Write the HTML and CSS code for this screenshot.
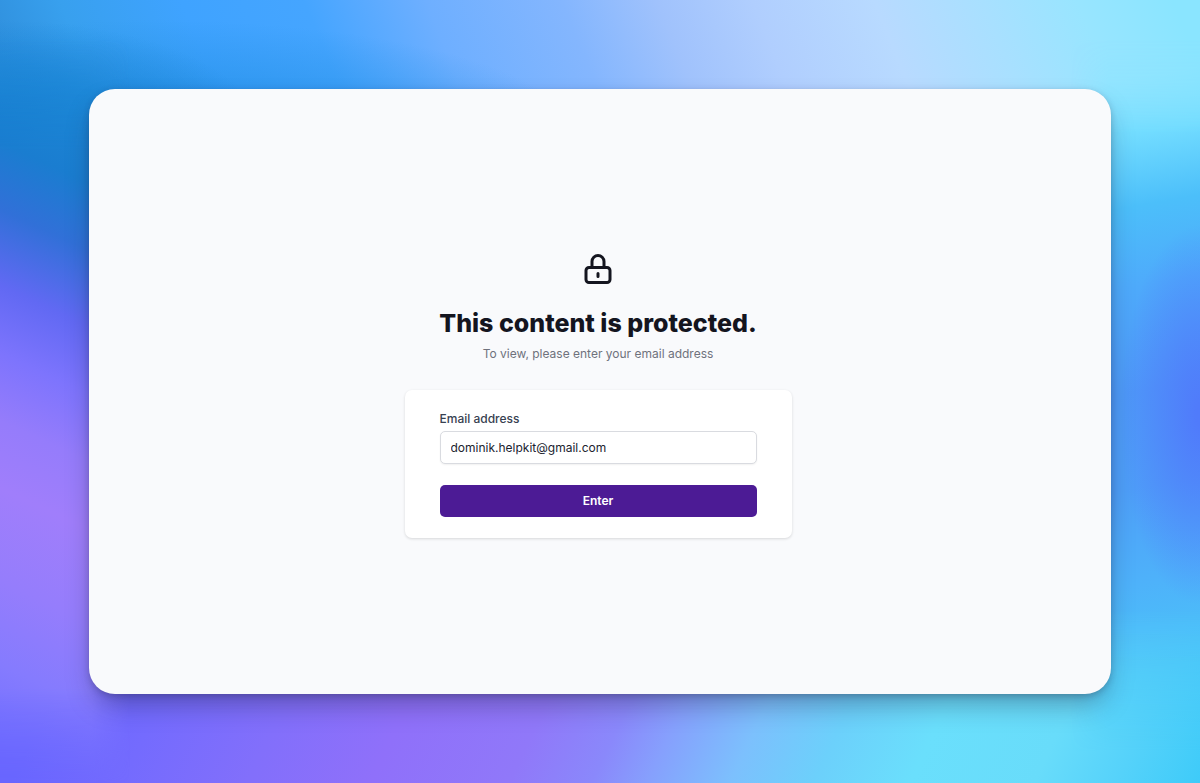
FILE: index.html
```html
<!DOCTYPE html>
<html lang="en">
<head>
<meta charset="utf-8">
<meta name="viewport" content="width=device-width, initial-scale=1">
<title>This content is protected.</title>
<link rel="stylesheet" href="styles.css">
</head>
<body class="page">
<div class="backdrop" aria-hidden="true">
  <div class="glow glow-top"></div>
  <div class="glow glow-bottom"></div>
  <div class="glow glow-left"></div>
  <div class="glow glow-right"></div>
</div>
<main class="panel">
  <div class="gate">
    <svg class="lock" viewBox="0 0 24 24" fill="none" stroke="currentColor" stroke-width="2" stroke-linecap="round" stroke-linejoin="round" aria-hidden="true">
      <path d="M12 15v2m-6 4h12a2 2 0 0 0 2-2v-6a2 2 0 0 0-2-2H6a2 2 0 0 0-2 2v6a2 2 0 0 0 2 2zm10-10V7a4 4 0 0 0-8 0v4h8z"/>
    </svg>
    <h1 class="title">This content is protected.</h1>
    <p class="subtitle">To view, please enter your email address</p>
    <form class="card">
      <label class="label" for="email">Email address</label>
      <input class="input" id="email" type="email" value="dominik.helpkit@gmail.com">
      <button class="button" type="submit">Enter</button>
    </form>
  </div>
</main>
</body>
</html>
```
FILE: styles.css
```css
* {
  box-sizing: border-box;
}

.page {
  margin: 0;
  min-height: 100vh;
  padding: 89px;
  display: flex;
  position: relative;
  font-family: Inter, "Liberation Sans", sans-serif;
  color: #14151f;
}

.backdrop {
  position: absolute;
  inset: 0;
  z-index: -1;
  overflow: hidden;
}

.glow {
  position: absolute;
}

.glow-top {
  inset: 0 0 50% 0;
  background:
    radial-gradient(ellipse 260px 110px at 0 130px, #167fd0 10%, rgba(22, 127, 208, 0) 100%),
    radial-gradient(ellipse 420px 110px at 150px 130px, #2590e6 0%, rgba(37, 144, 230, 0) 100%),
    linear-gradient(68deg, #3090dd 10%, #38a0ee 16%, #3fa3ff 25%, #45a5ff 34%, #6eafff 43%, #84b6fe 53%, #a0c2fc 60%, #b0cefe 67%, #b8daff 76%, #a8e0ff 84%, #98e5ff 91%, #8ae5ff 98%);
}

.glow-bottom {
  inset: 50% 0 0 0;
  background: linear-gradient(115deg, #6966ff 14%, #746bfe 22%, #826ffb 31%, #8f70fa 40%, #9078f9 50%, #8a88fb 56%, #86a0fd 60%, #7cc0fd 66%, #6cd0fb 72%, #6adffc 79%, #68dcfa 88%, #55d2fa 94%, #3ecbf9 100%);
}

.glow-left {
  inset: 0 auto 0 0;
  width: 130px;
  background: linear-gradient(205deg, #3090dd 6%, #1c88d6 13%, #1a7dd0 24%, #3170d8 32%, #6169f3 41%, #7d74fd 49%, #957cfb 57%, #a07efb 65%, #957dfc 76%, #857bfe 86%, #7470ff 95%, #6966ff 100%);
  mask-image: linear-gradient(transparent 5%, #000 19%, #000 88%, transparent 100%), linear-gradient(90deg, #000 70%, transparent);
  mask-composite: intersect;
}

.glow-right {
  inset: 0 0 0 auto;
  width: 130px;
  background:
    radial-gradient(ellipse 80px 190px at 100% 53%, #507bfb 5%, rgba(80, 123, 251, 0) 100%),
    linear-gradient(170deg, #8fe5ff 0%, #8ae4ff 11%, #72dcff 18%, #4cbffa 27%, #4eaafb 37%, #4e9af8 50%, #4e9ff8 62%, #4eb2fa 74%, #4ac4f8 85%, #42cdf9 100%);
  mask-image: linear-gradient(transparent 5%, #000 17%, #000 78%, transparent 96%), linear-gradient(270deg, #000 70%, transparent);
  mask-composite: intersect;
}

.panel {
  flex: 1;
  display: flex;
  align-items: center;
  justify-content: center;
  padding: 5px 4px 0 0;
  border-radius: 26px;
  background: #f9fafc;
  box-shadow: 0 14px 28px -6px rgba(30, 30, 60, 0.4), 0 2px 6px rgba(30, 30, 60, 0.22);
}

.gate {
  width: 100%;
  max-width: 387px;
  display: flex;
  flex-direction: column;
  align-items: center;
}

.lock {
  width: 36px;
  height: 36px;
}

.title {
  margin: 20px 0 0;
  font-size: 25px;
  line-height: 32px;
  font-weight: 800;
}

.subtitle {
  margin: 6px 0 0;
  font-size: 12px;
  line-height: 18px;
  color: #6f727c;
}

.card {
  align-self: stretch;
  margin-top: 27px;
  padding: 20px 35px 21px;
  display: flex;
  flex-direction: column;
  border-radius: 7px;
  background: #fff;
  box-shadow: 0 1px 3px rgba(0, 0, 0, 0.14);
}

.label {
  font-size: 12px;
  line-height: 18px;
  font-weight: 500;
  color: #374151;
}

.input {
  width: 100%;
  height: 33px;
  margin-top: 3px;
  padding: 0 10px;
  border: 1px solid #d9dbe0;
  border-radius: 5px;
  background: #fff;
  box-shadow: 0 1px 2px rgba(0, 0, 0, 0.06);
  font: inherit;
  font-size: 12px;
  color: #20222e;
}

.button {
  height: 32px;
  margin-top: 21px;
  border: 0;
  border-radius: 5px;
  background: #4c1b95;
  font: inherit;
  font-size: 12px;
  font-weight: 600;
  color: #fff;
}
```
